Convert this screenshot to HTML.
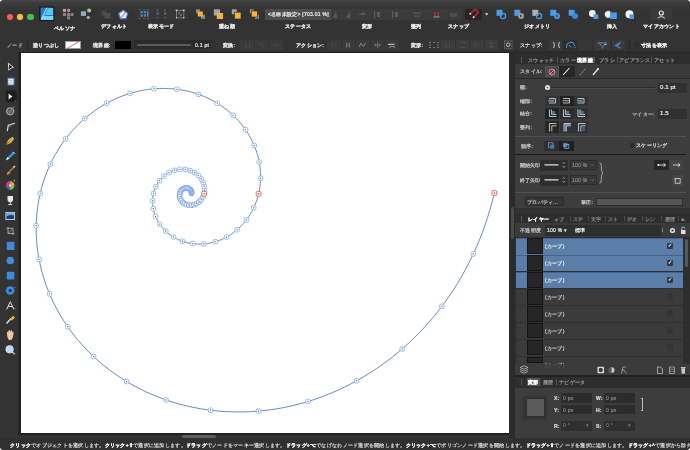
<!DOCTYPE html>
<html><head><meta charset="utf-8">
<style>
*{margin:0;padding:0;box-sizing:border-box}
html,body{width:690px;height:450px;background:#fff;overflow:hidden}
body{font-family:"Liberation Sans",sans-serif;position:relative}
.win{position:absolute;left:0;top:0;width:690px;height:450px;background:#333;border-radius:4px;overflow:hidden}
.a{position:absolute}
.t{position:absolute;font-size:5px;letter-spacing:.26px;line-height:7px;will-change:transform;-webkit-text-stroke-width:.2px;color:#d8d8d8;white-space:nowrap}
.b{font-weight:bold;color:#fff}
.b2{font-weight:bold;color:#e0e0e0}
.lbl{position:absolute;font-size:5px;letter-spacing:.26px;line-height:7px;will-change:transform;-webkit-text-stroke-width:.2px;color:#e8e8e8;white-space:nowrap;top:23px;font-weight:bold}
.canvas{position:absolute;left:21px;top:53px;width:488px;height:380px;background:#fff}
svg{position:absolute;left:0;top:0;overflow:visible}
.bn{fill:#fff;stroke:#86aee6;stroke-width:.85}
.bn2{fill:#fff;stroke:#6f9ee4;stroke-width:.9}
.bd{fill:#4a70a8}
.rn{fill:#fff;stroke:#e05a5a;stroke-width:.9}
</style></head><body>
<div class="win">
<!-- ===== top toolbar ===== -->
<div class="a tbgrad" style="left:0;top:0;width:690px;height:14px;background:linear-gradient(#4a4a4a 0,#3c3c3c 2.5px,#363636 8px,#333 14px)"></div>
<div class="a" style="left:6.7px;top:13.8px;width:6.6px;height:6.6px;border-radius:50%;background:#f0605a;box-shadow:0 0 0 .5px #6a2020"></div>
<div class="a" style="left:16.7px;top:13.8px;width:6.6px;height:6.6px;border-radius:50%;background:#f5bf48;box-shadow:0 0 0 .5px #6a4a10"></div>
<div class="a" style="left:27px;top:13.8px;width:6.6px;height:6.6px;border-radius:50%;background:#48c04c;box-shadow:0 0 0 .5px #1a5a1a"></div>

<div class="lbl" style="left:54px;top:25px">ペルソナ</div>
<div class="lbl" style="left:101px">デフォルト</div>
<div class="lbl" style="left:148px">表示モード</div>
<div class="lbl" style="left:219px">重ね順</div>
<div class="lbl" style="left:285px">ステータス</div>
<div class="lbl" style="left:362px">変形</div>
<div class="lbl" style="left:411px">整列</div>
<div class="lbl" style="left:448px">スナップ</div>
<div class="lbl" style="left:524px">ジオメトリ</div>
<div class="lbl" style="left:607px">挿入</div>
<div class="lbl" style="left:643px">マイアカウント</div>

<!-- status box -->
<div class="a" style="left:265px;top:8.5px;width:66px;height:11.5px;background:#4d4d4d"></div>
<div class="a" style="left:331px;top:8.5px;width:131px;height:11.5px;background:#3b3b3b"></div>
<div class="t" style="left:268px;top:11px;color:#eee">&lt;名称未設定&gt; [703.01 %]</div>
<div class="a" style="left:464.5px;top:9px;width:17px;height:11px;background:#262626"></div>
<div class="a" style="left:650.5px;top:8.3px;width:21.5px;height:11.3px;background:#3a3a3a"></div>

<!-- ===== context toolbar ===== -->
<div class="t" style="left:7px;top:41.5px;color:#bbb">ノード</div>
<div class="a" style="left:26.5px;top:40px;width:1px;height:10px;background:#262626"></div>
<div class="t b2" style="left:33px;top:41.5px">塗りつぶし</div>
<div class="a" style="left:65px;top:41px;width:16px;height:8px;background:#fff;border:.5px solid #999"></div>
<div class="t b2" style="left:93px;top:41.5px">境界線:</div>
<div class="a" style="left:115px;top:41px;width:16px;height:8px;background:#000"></div>
<div class="a" style="left:134px;top:40px;width:77px;height:9px;background:#2b2b2b"></div>
<div class="a" style="left:137px;top:44.3px;width:54px;height:1.6px;border-radius:1px;background:#5a5a5a"></div>
<div class="t" style="left:195px;top:41.5px;color:#eee">0.1 pt</div>
<div class="t b2" style="left:223px;top:41.5px">変換:</div>
<div class="a" style="left:240px;top:40px;width:43px;height:10px;background:#3a3a3a"></div>
<div class="t b2" style="left:296px;top:41.5px">アクション:</div>
<div class="a" style="left:327px;top:40px;width:72px;height:10px;background:#3a3a3a"></div>
<div class="t b2" style="left:411px;top:41.5px">変形:</div>
<div class="a" style="left:427px;top:40px;width:14px;height:10px;background:#353535"></div>
<div class="a" style="left:441px;top:40px;width:57px;height:10px;background:#3c3c3c"></div>
<div class="a" style="left:504px;top:40px;width:8.5px;height:10px;background:#3a3a3a"></div>
<div class="t" style="left:520px;top:41.5px;color:#e8e8e8">スナップ:</div>
<div class="a" style="left:549px;top:40px;width:28px;height:10px;background:#3a3a3a"></div><div class="a" style="left:563.2px;top:40px;width:13.8px;height:10px;background:#2e2e2e"></div><div class="a" style="left:577.5px;top:40px;width:15px;height:10px;background:#363636"></div><div class="a" style="left:593.5px;top:40px;width:16.5px;height:10px;background:#3a3a3a"></div><div class="a" style="left:611.5px;top:40px;width:13.5px;height:10px;background:#3a3a3a"></div>
<div class="a" style="left:629px;top:40px;width:1px;height:10px;background:#262626"></div>
<div class="a" style="left:633.5px;top:42px;width:5.5px;height:5.5px;background:#2e2e2e;border-radius:1px"></div>
<div class="t b2" style="left:641px;top:41.5px;color:#eee">寸法を表示</div>
<div class="a" style="left:19px;top:51.5px;width:490px;height:1.5px;background:#1e1e1e"></div>

<!-- ===== left tools ===== -->
<div class="a" style="left:18px;top:52px;width:3px;height:383px;background:linear-gradient(90deg,#2a2a2a,#1e1e1e)"></div><div class="a" style="left:18px;top:433px;width:491px;height:1.5px;background:#222"></div>

<!-- ===== canvas ===== -->
<div class="canvas"></div>
<svg width="690" height="450" viewBox="0 0 690 450" style="clip-path:inset(53px 181px 17px 21px)">
<path d="M494.3 193.0 492.3 201.2 490.0 209.4 487.6 217.4 485.0 225.2 482.2 233.0 479.2 240.6 476.0 248.1 472.6 255.5 469.0 262.7 465.3 269.8 461.4 276.8 457.4 283.6 453.2 290.2 448.8 296.7 444.3 303.0 439.7 309.2 434.9 315.2 430.0 321.0 425.0 326.6 419.9 332.1 414.6 337.4 409.2 342.6 403.8 347.5 398.2 352.3 392.6 356.9 386.8 361.3 381.0 365.5 375.1 369.6 369.2 373.4 363.1 377.1 357.0 380.6 350.9 383.9 344.7 387.0 338.5 389.9 332.2 392.7 325.9 395.2 319.6 397.6 313.3 399.8 306.9 401.8 300.5 403.6 294.1 405.3 287.8 406.7 281.4 408.0 275.0 409.1 268.6 410.0 262.3 410.7 256.0 411.3 249.7 411.7 243.4 411.9 237.2 411.9 231.0 411.8 224.9 411.5 218.8 411.1 212.7 410.5 206.8 409.7 200.8 408.8 195.0 407.7 189.2 406.5 183.5 405.1 177.8 403.6 172.3 402.0 166.8 400.2 161.4 398.2 156.0 396.2 150.8 394.0 145.7 391.7 140.7 389.2 135.7 386.7 130.9 384.0 126.2 381.2 121.5 378.3 117.0 375.3 112.6 372.2 108.3 369.0 104.1 365.7 100.1 362.4 96.1 358.9 92.3 355.3 88.6 351.7 85.0 348.0 81.5 344.2 78.2 340.4 75.0 336.5 71.9 332.5 68.9 328.5 66.1 324.4 63.4 320.3 60.8 316.1 58.4 311.9 56.1 307.6 53.9 303.4 51.8 299.0 49.9 294.7 48.1 290.3 46.4 286.0 44.9 281.6 43.5 277.1 42.2 272.7 41.0 268.3 40.0 263.9 39.1 259.4 38.3 255.0 37.6 250.6 37.1 246.2 36.7 241.8 36.4 237.4 36.2 233.1 36.2 228.8 36.2 224.5 36.4 220.2 36.7 216.0 37.1 211.8 37.6 207.6 38.2 203.5 38.9 199.4 39.7 195.4 40.7 191.4 41.7 187.5 42.8 183.6 44.1 179.8 45.4 176.0 46.8 172.3 48.3 168.7 49.9 165.1 51.6 161.6 53.3 158.2 55.2 154.8 57.1 151.5 59.1 148.3 61.1 145.2 63.3 142.1 65.5 139.1 67.7 136.2 70.1 133.3 72.5 130.6 74.9 127.9 77.4 125.3 80.0 122.8 82.6 120.4 85.2 118.1 88.0 115.8 90.7 113.7 93.5 111.6 96.3 109.6 99.2 107.7 102.0 105.9 105.0 104.2 107.9 102.6 110.9 101.0 113.9 99.6 116.9 98.2 119.9 97.0 122.9 95.8 126.0 94.7 129.0 93.7 132.1 92.8 135.2 92.0 138.3 91.2 141.3 90.6 144.4 90.0 147.5 89.5 150.5 89.2 153.6 88.9 156.6 88.6 159.6 88.5 162.6 88.4 165.6 88.5 168.6 88.6 171.5 88.7 174.4 89.0 177.3 89.3 180.2 89.8 183.0 90.2 185.8 90.8 188.6 91.4 191.3 92.1 194.0 92.9 196.7 93.7 199.3 94.6 201.8 95.6 204.4 96.6 206.9 97.7 209.3 98.9 211.7 100.1 214.0 101.4 216.3 102.7 218.6 104.0 220.8 105.5 222.9 106.9 225.0 108.5 227.1 110.0 229.0 111.6 231.0 113.3 232.8 115.0 234.6 116.7 236.4 118.5 238.1 120.3 239.7 122.1 241.3 124.0 242.8 125.9 244.2 127.8 245.6 129.8 246.9 131.7 248.2 133.7 249.4 135.8 250.5 137.8 251.6 139.9 252.6 141.9 253.6 144.0 254.5 146.1 255.3 148.2 256.1 150.3 256.8 152.4 257.4 154.6 258.0 156.7 258.5 158.8 259.0 161.0 259.4 163.1 259.7 165.2 260.0 167.3 260.2 169.4 260.4 171.6 260.5 173.7 260.6 175.7 260.6 177.8 260.5 179.9 260.4 181.9 260.2 183.9 260.0 185.9 259.7 187.9 259.4 189.9 259.0 191.9 258.6 193.8 258.1 195.7 257.6 197.6 257.0 199.4 256.4 201.2 255.7 203.0 255.0 204.8 254.3 206.5 253.5 208.2 252.7 209.9 251.8 211.5 250.9 213.1 249.9 214.7 249.0 216.2 247.9 217.7 246.9 219.2 245.8 220.6 244.7 222.0 243.6 223.3 242.4 224.6 241.2 225.9 240.0 227.1 238.7 228.3 237.5 229.4 236.2 230.5 234.9 231.6 233.5 232.6 232.2 233.5 230.8 234.5 229.4 235.4 228.0 236.2 226.6 237.0 225.2 237.8 223.8 238.5 222.3 239.1 220.9 239.8 219.4 240.4 217.9 240.9 216.5 241.4 215.0 241.8 213.5 242.3 212.0 242.6 210.6 243.0 209.1 243.2 207.6 243.5 206.1 243.7 204.7 243.9 203.2 244.0 201.7 244.1 200.3 244.1 198.9 244.1 197.4 244.1 196.0 244.0 194.6 243.9 193.2 243.7 191.8 243.6 190.5 243.3 189.1 243.1 187.8 242.8 186.4 242.5 185.1 242.1 183.8 241.7 182.6 241.3 181.3 240.8 180.1 240.4 178.9 239.9 177.7 239.3 176.6 238.7 175.4 238.1 174.3 237.5 173.2 236.9 172.1 236.2 171.1 235.5 170.1 234.8 169.1 234.0 168.1 233.3 167.2 232.5 166.3 231.7 165.4 230.8 164.6 230.0 163.7 229.1 162.9 228.3 162.2 227.4 161.4 226.5 160.7 225.5 160.0 224.6 159.4 223.7 158.8 222.7 158.2 221.7 157.6 220.8 157.1 219.8 156.6 218.8 156.1 217.8 155.7 216.8 155.3 215.8 154.9 214.7 154.5 213.7 154.2 212.7 153.9 211.7 153.7 210.7 153.4 209.6 153.2 208.6 153.0 207.6 152.9 206.6 152.8 205.5 152.7 204.5 152.6 203.5 152.6 202.5 152.6 201.5 152.6 200.5 152.6 199.5 152.7 198.5 152.8 197.6 152.9 196.6 153.1 195.7 153.3 194.7 153.4 193.8 153.7 192.9 153.9 192.0 154.2 191.1 154.5 190.2 154.8 189.3 155.1 188.5 155.5 187.6 155.8 186.8 156.2 186.0 156.6 185.2 157.1 184.4 157.5 183.7 158.0 182.9 158.5 182.2 159.0 181.5 159.5 180.8 160.0 180.1 160.5 179.5 161.1 178.8 161.7 178.2 162.2 177.6 162.8 177.0 163.4 176.5 164.1 176.0 164.7 175.4 165.3 174.9 166.0 174.5 166.6 174.0 167.3 173.6 168.0 173.2 168.6 172.8 169.3 172.4 170.0 172.0 170.7 171.7 171.4 171.4 172.1 171.1 172.8 170.8 173.5 170.6 174.2 170.4 174.9 170.2 175.6 170.0 176.4 169.8 177.1 169.7 177.8 169.5 178.5 169.4 179.2 169.3 179.9 169.3 180.6 169.2 181.3 169.2 182.0 169.2 182.7 169.2 183.4 169.2 184.0 169.3 184.7 169.3 185.4 169.4 186.1 169.5 186.7 169.6 187.4 169.8 188.0 169.9 188.6 170.1 189.2 170.3 189.9 170.5 190.5 170.7 191.1 170.9 191.6 171.1 192.2 171.4 192.8 171.7 193.3 172.0 193.9 172.2 194.4 172.6 194.9 172.9 195.4 173.2 195.9 173.5 196.4 173.9 196.9 174.3 197.3 174.6 197.8 175.0 198.2 175.4 198.6 175.8 199.0 176.2 199.4 176.7 199.8 177.1 200.1 177.5 200.5 178.0 200.8 178.4 201.1 178.9 201.4 179.3 201.7 179.8 202.0 180.2 202.3 180.7 202.5 181.2 202.8 181.7 203.0 182.2 203.2 182.6 203.4 183.1 203.5 183.6 203.7 184.1 203.8 184.6 204.0 185.1 204.1 185.6 204.2 186.1 204.3 186.6 204.4 187.1 204.4 187.6 204.5 188.1 204.5 188.5 204.5 189.0 204.5 189.5 204.5 190.0 204.5 190.5 204.5 190.9 204.5 191.4 204.4 191.9 204.3 192.3 204.3 192.8 204.2 193.2 204.1 193.7 204.0 194.1 203.8 194.5 203.7 195.0 203.5 195.4 203.4 195.8 203.2 196.2 203.1 196.6 202.9 197.0 202.7 197.4 202.5 197.8 202.3 198.1 202.0 198.5 201.8 198.9 201.6 199.2 201.3 199.5 201.1 199.9 200.8 200.2 200.6 200.5 200.3 200.8 200.0 201.1 199.7 201.4 199.4 201.6 199.1 201.9 198.8 202.1 198.5 202.4 198.2 202.6 197.9 202.8 197.6 203.1 197.3 203.3 196.9 203.5 196.6 203.6 196.3 203.8 196.0 204.0 195.6 204.1 195.3 204.3 194.9 204.4 194.6 204.5 194.3 204.6 193.9 204.7 193.6 204.8 193.2 204.9 192.9 205.0 192.6 205.1 192.2 205.1 191.9 205.2 191.5 205.2 191.2 205.2 190.9 205.2 190.5 205.2 190.2 205.2 189.9 205.2 189.5 205.2 189.2 205.2 188.9 205.2 188.6 205.1 188.2 205.1 187.9 205.0 187.6 204.9 187.3 204.9 187.0 204.8 186.7 204.7 186.4 204.6 186.1 204.5 185.9 204.4 185.6 204.2 185.3 204.1 185.0 204.0 184.8 203.8 184.5 203.7 184.3 203.5 184.0 203.4 183.8 203.2 183.5 203.1 183.3 202.9 183.1 202.7 182.9 202.5 182.7 202.3 182.5 202.1 182.3 201.9 182.1 201.7 181.9 201.5 181.7 201.3 181.6 201.1 181.4 200.9 181.2 200.7 181.1 200.5 180.9 200.2 180.8 200.0 180.7 199.8 180.6 199.6 180.4 199.3 180.3 199.1 180.2 198.9 180.1 198.6 180.1 198.4 180.0 198.2 179.9 197.9 179.8 197.7 179.8 197.5 179.7 197.2 179.7 197.0 179.6 196.7 179.6 196.5 179.6 196.3 179.6 196.0 179.5 195.8 179.5 195.6 179.5 195.3 179.5 195.1 179.6 194.9 179.6 194.7 179.6 194.4 179.6 194.2 179.7 194.0 179.7 193.8 179.7 193.6 179.8 193.3 179.9 193.1 179.9 192.9 180.0 192.7 180.1 192.5 180.1 192.3 180.2 192.1 180.3 191.9 180.4 191.8 180.5 191.6 180.6 191.4 180.7 191.2 180.8 191.0 180.9 190.9 181.0 190.7 181.2 190.6 181.3 190.4 181.4 190.2 181.5 190.1 181.7 190.0 181.8 189.8 181.9 189.7 182.1 189.6 182.2 189.4 182.4 189.3 182.5 189.2 182.7 189.1 182.8 189.0 183.0 188.9 183.1 188.8 183.3 188.7 183.4 188.6 183.6 188.5 183.8 188.5 183.9 188.4 184.1 188.3 184.3 188.3 184.4 188.2 184.6 188.2 184.7 188.1 184.9 188.1 185.1 188.0 185.2 188.0 185.4 188.0 185.6 188.0 185.7 187.9 185.9 187.9 186.1 187.9 186.2 187.9 186.4 187.9 186.5 187.9 186.7 187.9 186.9 187.9 187.0 187.9 187.2 188.0 187.3 188.0 187.5 188.0 187.6 188.0 187.8 188.1 187.9 188.1 188.1 188.2 188.2 188.2 188.3 188.3 188.5 188.3 188.6 188.4 188.7 188.4 188.9 188.5 189.0 188.5 189.1 188.6 189.2 188.7 189.4 188.8 189.5 188.8 189.6 188.9 189.7 189.0 189.8 189.1 189.9 189.2 190.0 189.3 190.1 189.4 190.2 189.5 190.3 189.5 190.4 189.6 190.5 189.7 190.6 189.8 190.6 189.9 190.7 190.1 190.8 190.2 190.9 190.3 190.9 190.4 191.0 190.5 191.1 190.6 191.1 190.7 191.2 190.8 191.2 190.9 191.3 191.0 191.3 191.1 191.3 191.3 191.4 191.4 191.4 191.5 191.4 191.6 191.5 191.7 191.5 191.8 191.5 191.9 191.5 192.1 191.5 192.2 191.6 192.3 191.6 192.4 191.6 192.5 191.6 192.6 191.6 192.7 191.6 192.8 191.6 193.0 191.5 193.1 191.5 193.2 191.5 193.3 191.5 193.4 191.5 193.5 191.5 193.6" fill="none" stroke="#5576a6" stroke-width=".85"/>
<rect x="189.2" y="191.3" width="4.5" height="4.5" rx="1.6" class="bn2"/><rect x="190.9" y="193.0" width="1.2" height="1.2" class="bd"/>
<rect x="189.3" y="190.5" width="4.5" height="4.5" rx="1.6" class="bn2"/><rect x="191.0" y="192.2" width="1.2" height="1.2" class="bd"/>
<rect x="189.3" y="189.6" width="4.5" height="4.5" rx="1.6" class="bn2"/><rect x="190.9" y="191.3" width="1.2" height="1.2" class="bd"/>
<rect x="189.0" y="188.8" width="4.5" height="4.5" rx="1.6" class="bn2"/><rect x="190.6" y="190.4" width="1.2" height="1.2" class="bd"/>
<rect x="188.5" y="187.9" width="4.5" height="4.5" rx="1.6" class="bn2"/><rect x="190.2" y="189.5" width="1.2" height="1.2" class="bd"/>
<rect x="187.9" y="187.1" width="4.5" height="4.5" rx="1.6" class="bn2"/><rect x="189.5" y="188.8" width="1.2" height="1.2" class="bd"/>
<rect x="187.0" y="186.5" width="4.5" height="4.5" rx="1.6" class="bn2"/><rect x="188.7" y="188.1" width="1.2" height="1.2" class="bd"/>
<rect x="186.0" y="186.0" width="4.5" height="4.5" rx="1.6" class="bn2"/><rect x="187.7" y="187.6" width="1.2" height="1.2" class="bd"/>
<rect x="184.9" y="185.7" width="4.5" height="4.5" rx="1.6" class="bn2"/><rect x="186.5" y="187.4" width="1.2" height="1.2" class="bd"/>
<rect x="183.7" y="185.7" width="4.5" height="4.5" rx="1.6" class="bn2"/><rect x="185.3" y="187.3" width="1.2" height="1.2" class="bd"/>
<rect x="182.4" y="185.9" width="4.5" height="4.5" rx="1.6" class="bn2"/><rect x="184.0" y="187.5" width="1.2" height="1.2" class="bd"/>
<rect x="181.1" y="186.4" width="4.5" height="4.5" rx="1.6" class="bn2"/><rect x="182.8" y="188.1" width="1.2" height="1.2" class="bd"/>
<rect x="179.9" y="187.2" width="4.5" height="4.5" rx="1.6" class="bn2"/><rect x="181.6" y="188.9" width="1.2" height="1.2" class="bd"/>
<rect x="178.9" y="188.3" width="4.5" height="4.5" rx="1.6" class="bn2"/><rect x="180.6" y="189.9" width="1.2" height="1.2" class="bd"/>
<rect x="178.1" y="189.6" width="4.5" height="4.5" rx="1.6" class="bn2"/><rect x="179.7" y="191.3" width="1.2" height="1.2" class="bd"/>
<rect x="177.5" y="191.2" width="4.5" height="4.5" rx="1.6" class="bn2"/><rect x="179.2" y="192.8" width="1.2" height="1.2" class="bd"/>
<rect x="177.3" y="192.9" width="4.5" height="4.5" rx="1.6" class="bn2"/><rect x="178.9" y="194.6" width="1.2" height="1.2" class="bd"/>
<rect x="177.4" y="194.7" width="4.5" height="4.5" rx="1.6" class="bn2"/><rect x="179.1" y="196.4" width="1.2" height="1.2" class="bd"/>
<rect x="178.0" y="196.6" width="4.5" height="4.5" rx="1.6" class="bn2"/><rect x="179.6" y="198.2" width="1.2" height="1.2" class="bd"/>
<rect x="178.9" y="198.3" width="4.5" height="4.5" rx="1.6" class="bn2"/><rect x="180.6" y="200.0" width="1.2" height="1.2" class="bd"/>
<rect x="180.3" y="200.0" width="4.5" height="4.5" rx="1.6" class="bn2"/><rect x="181.9" y="201.6" width="1.2" height="1.2" class="bd"/>
<rect x="182.0" y="201.3" width="4.5" height="4.5" rx="1.6" class="bn2"/><rect x="183.7" y="203.0" width="1.2" height="1.2" class="bd"/>
<rect x="184.1" y="202.3" width="4.5" height="4.5" rx="1.6" class="bn2"/><rect x="185.8" y="204.0" width="1.2" height="1.2" class="bd"/>
<rect x="186.5" y="202.9" width="4.5" height="4.5" rx="1.6" class="bn2"/><rect x="188.2" y="204.5" width="1.2" height="1.2" class="bd"/>
<rect x="189.1" y="203.0" width="4.5" height="4.5" rx="1.6" class="bn2"/><rect x="190.7" y="204.6" width="1.2" height="1.2" class="bd"/>
<rect x="191.7" y="202.5" width="4.5" height="4.5" rx="1.6" class="bn2"/><rect x="193.4" y="204.1" width="1.2" height="1.2" class="bd"/>
<rect x="194.3" y="201.4" width="4.5" height="4.5" rx="1.6" class="bn2"/><rect x="196.0" y="203.0" width="1.2" height="1.2" class="bd"/>
<rect x="196.8" y="199.7" width="4.5" height="4.5" rx="1.6" class="bn2"/><rect x="198.4" y="201.4" width="1.2" height="1.2" class="bd"/>
<rect x="198.9" y="197.5" width="4.5" height="4.5" rx="1.6" class="bn2"/><rect x="200.6" y="199.1" width="1.2" height="1.2" class="bd"/>
<rect x="200.7" y="194.7" width="4.5" height="4.5" rx="1.6" class="bn2"/><rect x="202.3" y="196.3" width="1.2" height="1.2" class="bd"/>
<rect x="202.3" y="187.8" width="4.5" height="4.5" rx="1.6" class="bn"/><rect x="203.9" y="189.5" width="1.2" height="1.2" class="bd"/>
<rect x="202.0" y="184.1" width="4.5" height="4.5" rx="1.6" class="bn"/><rect x="203.6" y="185.7" width="1.2" height="1.2" class="bd"/>
<rect x="200.9" y="180.2" width="4.5" height="4.5" rx="1.6" class="bn"/><rect x="202.5" y="181.9" width="1.2" height="1.2" class="bd"/>
<rect x="198.9" y="176.6" width="4.5" height="4.5" rx="1.6" class="bn"/><rect x="200.5" y="178.2" width="1.2" height="1.2" class="bd"/>
<rect x="196.0" y="173.2" width="4.5" height="4.5" rx="1.6" class="bn"/><rect x="197.7" y="174.9" width="1.2" height="1.2" class="bd"/>
<rect x="192.4" y="170.4" width="4.5" height="4.5" rx="1.6" class="bn"/><rect x="194.0" y="172.1" width="1.2" height="1.2" class="bd"/>
<rect x="188.0" y="168.3" width="4.5" height="4.5" rx="1.6" class="bn"/><rect x="189.6" y="170.0" width="1.2" height="1.2" class="bd"/>
<rect x="183.1" y="167.2" width="4.5" height="4.5" rx="1.6" class="bn"/><rect x="184.7" y="168.8" width="1.2" height="1.2" class="bd"/>
<rect x="177.7" y="167.0" width="4.5" height="4.5" rx="1.6" class="bn"/><rect x="179.4" y="168.7" width="1.2" height="1.2" class="bd"/>
<rect x="172.2" y="168.1" width="4.5" height="4.5" rx="1.6" class="bn"/><rect x="173.9" y="169.7" width="1.2" height="1.2" class="bd"/>
<rect x="166.8" y="170.3" width="4.5" height="4.5" rx="1.6" class="bn"/><rect x="168.4" y="172.0" width="1.2" height="1.2" class="bd"/>
<rect x="161.7" y="173.8" width="4.5" height="4.5" rx="1.6" class="bn"/><rect x="163.3" y="175.5" width="1.2" height="1.2" class="bd"/>
<rect x="157.2" y="178.5" width="4.5" height="4.5" rx="1.6" class="bn"/><rect x="158.9" y="180.2" width="1.2" height="1.2" class="bd"/>
<rect x="153.7" y="184.3" width="4.5" height="4.5" rx="1.6" class="bn"/><rect x="155.3" y="186.0" width="1.2" height="1.2" class="bd"/>
<rect x="151.3" y="191.1" width="4.5" height="4.5" rx="1.6" class="bn"/><rect x="153.0" y="192.7" width="1.2" height="1.2" class="bd"/>
<rect x="150.3" y="198.5" width="4.5" height="4.5" rx="1.6" class="bn"/><rect x="152.0" y="200.2" width="1.2" height="1.2" class="bd"/>
<rect x="151.0" y="206.4" width="4.5" height="4.5" rx="1.6" class="bn"/><rect x="152.6" y="208.0" width="1.2" height="1.2" class="bd"/>
<rect x="153.3" y="214.3" width="4.5" height="4.5" rx="1.6" class="bn"/><rect x="155.0" y="216.0" width="1.2" height="1.2" class="bd"/>
<rect x="157.5" y="221.9" width="4.5" height="4.5" rx="1.6" class="bn"/><rect x="159.2" y="223.6" width="1.2" height="1.2" class="bd"/>
<rect x="163.5" y="228.9" width="4.5" height="4.5" rx="1.6" class="bn"/><rect x="165.1" y="230.5" width="1.2" height="1.2" class="bd"/>
<rect x="171.1" y="234.7" width="4.5" height="4.5" rx="1.6" class="bn"/><rect x="172.7" y="236.3" width="1.2" height="1.2" class="bd"/>
<rect x="180.2" y="239.0" width="4.5" height="4.5" rx="1.6" class="bn"/><rect x="181.8" y="240.6" width="1.2" height="1.2" class="bd"/>
<rect x="190.4" y="241.4" width="4.5" height="4.5" rx="1.6" class="bn"/><rect x="192.1" y="243.1" width="1.2" height="1.2" class="bd"/>
<rect x="201.5" y="241.7" width="4.5" height="4.5" rx="1.6" class="bn"/><rect x="203.2" y="243.3" width="1.2" height="1.2" class="bd"/>
<rect x="213.0" y="239.5" width="4.5" height="4.5" rx="1.6" class="bn"/><rect x="214.6" y="241.2" width="1.2" height="1.2" class="bd"/>
<rect x="224.3" y="234.8" width="4.5" height="4.5" rx="1.6" class="bn"/><rect x="225.9" y="236.5" width="1.2" height="1.2" class="bd"/>
<rect x="234.8" y="227.5" width="4.5" height="4.5" rx="1.6" class="bn"/><rect x="236.5" y="229.1" width="1.2" height="1.2" class="bd"/>
<rect x="244.1" y="217.7" width="4.5" height="4.5" rx="1.6" class="bn"/><rect x="245.7" y="219.3" width="1.2" height="1.2" class="bd"/>
<rect x="251.4" y="205.6" width="4.5" height="4.5" rx="1.6" class="bn"/><rect x="253.1" y="207.2" width="1.2" height="1.2" class="bd"/>
<rect x="258.3" y="176.0" width="4.5" height="4.5" rx="1.6" class="bn"/><rect x="260.0" y="177.7" width="1.2" height="1.2" class="bd"/>
<rect x="256.9" y="159.7" width="4.5" height="4.5" rx="1.6" class="bn"/><rect x="258.6" y="161.4" width="1.2" height="1.2" class="bd"/>
<rect x="252.0" y="143.2" width="4.5" height="4.5" rx="1.6" class="bn"/><rect x="253.6" y="144.9" width="1.2" height="1.2" class="bd"/>
<rect x="243.3" y="127.4" width="4.5" height="4.5" rx="1.6" class="bn"/><rect x="244.9" y="129.0" width="1.2" height="1.2" class="bd"/>
<rect x="230.9" y="113.0" width="4.5" height="4.5" rx="1.6" class="bn"/><rect x="232.5" y="114.7" width="1.2" height="1.2" class="bd"/>
<rect x="215.0" y="101.0" width="4.5" height="4.5" rx="1.6" class="bn"/><rect x="216.7" y="102.6" width="1.2" height="1.2" class="bd"/>
<rect x="196.1" y="92.1" width="4.5" height="4.5" rx="1.6" class="bn"/><rect x="197.7" y="93.7" width="1.2" height="1.2" class="bd"/>
<rect x="174.7" y="87.0" width="4.5" height="4.5" rx="1.6" class="bn"/><rect x="176.3" y="88.7" width="1.2" height="1.2" class="bd"/>
<rect x="151.6" y="86.6" width="4.5" height="4.5" rx="1.6" class="bn"/><rect x="153.3" y="88.2" width="1.2" height="1.2" class="bd"/>
<rect x="127.8" y="91.1" width="4.5" height="4.5" rx="1.6" class="bn"/><rect x="129.5" y="92.8" width="1.2" height="1.2" class="bd"/>
<rect x="104.4" y="101.0" width="4.5" height="4.5" rx="1.6" class="bn"/><rect x="106.0" y="102.7" width="1.2" height="1.2" class="bd"/>
<rect x="82.5" y="116.3" width="4.5" height="4.5" rx="1.6" class="bn"/><rect x="84.1" y="117.9" width="1.2" height="1.2" class="bd"/>
<rect x="63.3" y="136.7" width="4.5" height="4.5" rx="1.6" class="bn"/><rect x="64.9" y="138.4" width="1.2" height="1.2" class="bd"/>
<rect x="48.1" y="161.9" width="4.5" height="4.5" rx="1.6" class="bn"/><rect x="49.7" y="163.6" width="1.2" height="1.2" class="bd"/>
<rect x="37.9" y="191.2" width="4.5" height="4.5" rx="1.6" class="bn"/><rect x="39.6" y="192.8" width="1.2" height="1.2" class="bd"/>
<rect x="33.9" y="223.4" width="4.5" height="4.5" rx="1.6" class="bn"/><rect x="35.6" y="225.0" width="1.2" height="1.2" class="bd"/>
<rect x="36.9" y="257.3" width="4.5" height="4.5" rx="1.6" class="bn"/><rect x="38.5" y="259.0" width="1.2" height="1.2" class="bd"/>
<rect x="47.3" y="291.6" width="4.5" height="4.5" rx="1.6" class="bn"/><rect x="48.9" y="293.2" width="1.2" height="1.2" class="bd"/>
<rect x="65.4" y="324.5" width="4.5" height="4.5" rx="1.6" class="bn"/><rect x="67.1" y="326.1" width="1.2" height="1.2" class="bd"/>
<rect x="91.3" y="354.3" width="4.5" height="4.5" rx="1.6" class="bn"/><rect x="93.0" y="355.9" width="1.2" height="1.2" class="bd"/>
<rect x="124.4" y="379.3" width="4.5" height="4.5" rx="1.6" class="bn"/><rect x="126.0" y="380.9" width="1.2" height="1.2" class="bd"/>
<rect x="163.8" y="397.7" width="4.5" height="4.5" rx="1.6" class="bn"/><rect x="165.4" y="399.3" width="1.2" height="1.2" class="bd"/>
<rect x="208.3" y="408.0" width="4.5" height="4.5" rx="1.6" class="bn"/><rect x="209.9" y="409.6" width="1.2" height="1.2" class="bd"/>
<rect x="256.3" y="408.8" width="4.5" height="4.5" rx="1.6" class="bn"/><rect x="257.9" y="410.5" width="1.2" height="1.2" class="bd"/>
<rect x="305.7" y="399.2" width="4.5" height="4.5" rx="1.6" class="bn"/><rect x="307.4" y="400.9" width="1.2" height="1.2" class="bd"/>
<rect x="354.4" y="378.6" width="4.5" height="4.5" rx="1.6" class="bn"/><rect x="356.0" y="380.2" width="1.2" height="1.2" class="bd"/>
<rect x="399.9" y="346.7" width="4.5" height="4.5" rx="1.6" class="bn"/><rect x="401.5" y="348.4" width="1.2" height="1.2" class="bd"/>
<rect x="439.6" y="304.1" width="4.5" height="4.5" rx="1.6" class="bn"/><rect x="441.3" y="305.7" width="1.2" height="1.2" class="bd"/>
<rect x="471.1" y="251.6" width="4.5" height="4.5" rx="1.6" class="bn"/><rect x="472.8" y="253.2" width="1.2" height="1.2" class="bd"/>
<rect x="201.7" y="191.3" width="4.8" height="4.8" rx="1.3" class="rn"/><rect x="203.4" y="193.0" width="1.3" height="1.3" fill="#c33"/>
<rect x="256.2" y="191.4" width="4.8" height="4.8" rx="1.3" class="rn"/><rect x="257.9" y="193.1" width="1.3" height="1.3" fill="#c33"/>
<rect x="491.9" y="190.6" width="4.8" height="4.8" rx="1.3" class="rn"/><rect x="493.6" y="192.4" width="1.3" height="1.3" fill="#c33"/>
</svg>

<!-- ===== right panel ===== -->
<div class="a" style="left:509px;top:50.5px;width:181px;height:388px;background:#2b2b2b"></div>
<div class="a" style="left:511px;top:207px;width:3px;height:32px;border-radius:1.5px;background:#4a4a4a"></div>
<!-- stroke panel -->
<div class="a" style="left:514.5px;top:54px;width:175.5px;height:10.3px;background:#2d2d2d"></div>
<div class="a" style="left:514.5px;top:64.3px;width:175.5px;height:13.3px;background:#3a3a3a"></div>
<div class="a" style="left:514.5px;top:77.6px;width:175.5px;height:1.4px;background:#2a2a2a"></div>
<div class="a" style="left:514.5px;top:79px;width:175.5px;height:129px;background:#3d3d3d"></div>
<div class="a" style="left:520.5px;top:56.5px;width:.8px;height:6px;background:#555"></div>
<div class="t" style="left:528px;top:56.5px;color:#999">スウォッチ</div>
<div class="a" style="left:556.5px;top:56.5px;width:.8px;height:6px;background:#555"></div>
<div class="t" style="left:559.5px;top:56.5px;color:#999">カラー</div>
<div class="a" style="left:577.2px;top:56.5px;width:18px;height:6.5px;background:#555"></div>
<div class="t" style="left:577.3px;top:56.5px;color:#fff;font-weight:bold">境界線</div>
<div class="t" style="left:599px;top:56.5px;color:#999">ブラシ</div>
<div class="a" style="left:617px;top:56.5px;width:.8px;height:6px;background:#555"></div>
<div class="t" style="left:619px;top:56.5px;color:#999">アピアランス</div>
<div class="a" style="left:651.2px;top:56.5px;width:.8px;height:6px;background:#555"></div>
<div class="t" style="left:653.5px;top:56.5px;color:#999">アセット</div>
<div class="t" style="left:520px;top:67.5px;color:#ccc">スタイル:</div>
<div class="a" style="left:545px;top:65.5px;width:14px;height:11px;background:#4a4a4a;border:.6px solid #555"></div>
<div class="a" style="left:559px;top:65.5px;width:16px;height:11px;background:#262626"></div>
<div class="a" style="left:575px;top:65.5px;width:17px;height:11px;background:#3a3a3a"></div>
<div class="a" style="left:592px;top:65.5px;width:9px;height:11px;background:#3a3a3a"></div>
<div class="t" style="left:520px;top:84px;color:#ccc">幅:</div>
<div class="a" style="left:549px;top:86.5px;width:106px;height:1px;background:#2a2a2a"></div><div class="a" style="left:549px;top:87.5px;width:106px;height:.6px;background:#4a4a4a"></div>
<div class="a" style="left:544.6px;top:84.7px;width:5.6px;height:5.6px;border-radius:50%;background:#eee"></div>
<div class="a" style="left:658px;top:83px;width:28.5px;height:10px;background:#303030"></div>
<div class="t" style="left:660px;top:84px;color:#eee;font-size:6px;letter-spacing:.1px">0.1 pt</div>
<div class="t" style="left:520px;top:97.5px;color:#ccc">端部:</div>
<div class="t" style="left:520px;top:110px;color:#ccc">結合:</div>
<div class="t" style="left:520px;top:123.5px;color:#ccc">整列:</div>
<div class="a" style="left:545px;top:96px;width:14.3px;height:9.5px;background:#333"></div><div class="a" style="left:559.5px;top:96px;width:14.3px;height:9.5px;background:#222"></div><div class="a" style="left:574px;top:96px;width:14px;height:9.5px;background:#333"></div>
<div class="a" style="left:545px;top:108px;width:14.3px;height:10.7px;background:#222"></div><div class="a" style="left:559.5px;top:108px;width:14.3px;height:10.7px;background:#2c2c2c"></div><div class="a" style="left:574px;top:108px;width:14px;height:10.7px;background:#333"></div>
<div class="a" style="left:545px;top:121px;width:14.3px;height:12px;background:#262626"></div><div class="a" style="left:559.5px;top:121px;width:14.3px;height:12px;background:#333"></div><div class="a" style="left:574px;top:121px;width:14px;height:12px;background:#333"></div>
<div class="t" style="left:632px;top:110.5px;color:#bbb">マイター:</div>
<div class="a" style="left:658px;top:109px;width:28.5px;height:10px;background:#303030"></div>
<div class="t" style="left:660px;top:110px;color:#eee;font-size:6px;letter-spacing:.1px">1.5</div>
<div class="a" style="left:514.5px;top:135.6px;width:171.5px;height:1.1px;background:#505050"></div>
<div class="t" style="left:520.5px;top:142.5px;color:#ccc">順序:</div>
<div class="a" style="left:544px;top:140.5px;width:15px;height:10.2px;background:#2f2f2f"></div>
<div class="a" style="left:559px;top:140.5px;width:15px;height:10.2px;background:#202020"></div>
<div class="a" style="left:629.5px;top:143px;width:4.5px;height:4.5px;border-radius:1px;background:#2c2c2c"></div>
<div class="t" style="left:636px;top:142px;color:#eee">スケーリング</div>
<div class="a" style="left:514.5px;top:153.8px;width:171.5px;height:1.1px;background:#1a1a1a"></div>
<div class="t" style="left:520px;top:161.5px;color:#ccc;letter-spacing:-.1px">開始矢印</div>
<div class="t" style="left:520px;top:176.5px;color:#ccc;letter-spacing:-.1px">終了矢印</div>
<div class="a" style="left:539.5px;top:159.5px;width:28px;height:11px;background:#2e2e2e"></div>
<div class="a" style="left:539.5px;top:174.5px;width:28px;height:11px;background:#2e2e2e"></div>




<div class="a" style="left:570px;top:159.5px;width:26.5px;height:10.5px;background:#383838;border:.6px solid #2c2c2c"></div>
<div class="a" style="left:570px;top:174.5px;width:26.5px;height:10.5px;background:#383838;border:.6px solid #2c2c2c"></div>
<div class="t" style="left:572px;top:161.5px;color:#888">100 %</div>
<div class="t" style="left:572px;top:176.5px;color:#888">100 %</div>

<div class="a" style="left:654px;top:160px;width:15px;height:10px;background:#262626"></div>
<div class="a" style="left:669px;top:160px;width:14px;height:10px;background:#454545"></div>


<div class="a" style="left:672px;top:175px;width:11px;height:11px;background:#454545"></div>

<div class="a" style="left:514.5px;top:192.4px;width:171.5px;height:1.1px;background:#505050"></div>
<div class="a" style="left:525px;top:197.4px;width:38.5px;height:9px;background:#363636;border:.7px solid #2a2a2a;border-radius:1px"></div>
<div class="t" style="left:527px;top:198.5px;color:#bbb">プロパティ...</div>
<div class="t" style="left:581px;top:198.5px;color:#ccc">筆圧:</div>
<div class="a" style="left:596px;top:198px;width:87px;height:8px;background:#2c2c2c"></div>
<div class="a" style="left:597px;top:199px;width:85px;height:6px;background:#555"></div>
<!-- layers panel -->
<div class="a" style="left:514.5px;top:208px;width:175.5px;height:6px;background:#323232"></div>
<div class="a" style="left:514.5px;top:214px;width:175.5px;height:9px;background:#2e2e2e"></div>
<div class="a" style="left:520.5px;top:215.5px;width:.8px;height:6px;background:#555"></div>
<div class="t" style="left:528px;top:215.5px;color:#fff;font-weight:bold">レイヤー</div>
<div class="t" style="left:554px;top:215.5px;color:#8a8a8a">ォブ</div><div class="t" style="left:573px;top:215.5px;color:#8a8a8a">ステ</div><div class="t" style="left:591px;top:215.5px;color:#8a8a8a">文字</div><div class="t" style="left:607.5px;top:215.5px;color:#8a8a8a">スト</div><div class="t" style="left:627px;top:215.5px;color:#8a8a8a">デオ</div><div class="t" style="left:644.5px;top:215.5px;color:#8a8a8a">シン</div><div class="t" style="left:665px;top:215.5px;color:#8a8a8a">履歴</div><div class="t" style="left:681px;top:215.5px;color:#8a8a8a">■.</div><div class="a" style="left:569.5px;top:215.8px;width:.7px;height:5.5px;background:#4a4a4a"></div><div class="a" style="left:588px;top:215.8px;width:.7px;height:5.5px;background:#4a4a4a"></div><div class="a" style="left:604.5px;top:215.8px;width:.7px;height:5.5px;background:#4a4a4a"></div><div class="a" style="left:623.5px;top:215.8px;width:.7px;height:5.5px;background:#4a4a4a"></div><div class="a" style="left:641.5px;top:215.8px;width:.7px;height:5.5px;background:#4a4a4a"></div><div class="a" style="left:661px;top:215.8px;width:.7px;height:5.5px;background:#4a4a4a"></div><div class="a" style="left:677.5px;top:215.8px;width:.7px;height:5.5px;background:#4a4a4a"></div>
<div class="a" style="left:514.5px;top:223px;width:175.5px;height:14px;background:#3b3b3b"></div>
<div class="t" style="left:520px;top:227px;color:#ccc">不透明度</div>
<div class="a" style="left:545px;top:225px;width:26px;height:11px;background:#2e2e2e"></div>
<div class="t" style="left:547px;top:227px;color:#eee">100 %  ▾</div>
<div class="a" style="left:571px;top:225px;width:90px;height:11px;background:#2e2e2e"></div>
<div class="t" style="left:575px;top:227px;color:#eee">標準</div>
<div class="t" style="left:662px;top:227px;color:#ccc">⁝</div>
<div class="a" style="left:514.5px;top:237px;width:168px;height:126.5px;background:#2e2e2e"></div>
<div class="a" style="left:682.5px;top:237px;width:7.5px;height:126.5px;background:#2e2e2e"></div>
<div class="a" style="left:684.5px;top:238.5px;width:3px;height:28px;border-radius:1.5px;background:#585858"></div>
<div class="a" style="left:516px;top:237.7px;width:166.5px;height:16.9px;background:#5b7ea8;border-top:1px solid #46648a"></div>
<div class="a" style="left:527.2px;top:238.39999999999998px;width:15.6px;height:15.6px;background:#262626;border:.7px solid #141414"></div>
<div class="t" style="left:545px;top:243.2px;color:#e8eef8">(カーブ)</div>
<div class="a" style="left:666.5px;top:242.7px;width:6.5px;height:6.5px;border-radius:1px;background:#2d3a4a"></div><div class="t" style="left:667.5px;top:242.2px;color:#fff;font-size:5px">✓</div>
<div class="a" style="left:516px;top:254.6px;width:166.5px;height:16.9px;background:#5b7ea8;border-top:1px solid #46648a"></div>
<div class="a" style="left:527.2px;top:255.29999999999998px;width:15.6px;height:15.6px;background:#262626;border:.7px solid #141414"></div>
<div class="t" style="left:545px;top:260.1px;color:#e8eef8">(カーブ)</div>
<div class="a" style="left:666.5px;top:259.6px;width:6.5px;height:6.5px;border-radius:1px;background:#2d3a4a"></div><div class="t" style="left:667.5px;top:259.1px;color:#fff;font-size:5px">✓</div>
<div class="a" style="left:516px;top:271.5px;width:166.5px;height:16.9px;background:#5b7ea8;border-top:1px solid #46648a"></div>
<div class="a" style="left:527.2px;top:272.2px;width:15.6px;height:15.6px;background:#262626;border:.7px solid #141414"></div>
<div class="t" style="left:545px;top:277.0px;color:#e8eef8">(カーブ)</div>
<div class="a" style="left:666.5px;top:276.5px;width:6.5px;height:6.5px;border-radius:1px;background:#2d3a4a"></div><div class="t" style="left:667.5px;top:276.0px;color:#fff;font-size:5px">✓</div>
<div class="a" style="left:516px;top:288.4px;width:166.5px;height:16.9px;background:#3b3b3b;border-top:1px solid #303030"></div>
<div class="a" style="left:527.2px;top:289.09999999999997px;width:15.6px;height:15.6px;background:#262626;border:.7px solid #141414"></div>
<div class="t" style="left:545px;top:293.9px;color:#ccc">(カーブ)</div>
<div class="a" style="left:666.5px;top:293.4px;width:6.5px;height:6.5px;border-radius:1px;background:#353535"></div>
<div class="a" style="left:516px;top:305.3px;width:166.5px;height:16.9px;background:#3b3b3b;border-top:1px solid #303030"></div>
<div class="a" style="left:527.2px;top:306.0px;width:15.6px;height:15.6px;background:#262626;border:.7px solid #141414"></div>
<div class="t" style="left:545px;top:310.8px;color:#ccc">(カーブ)</div>
<div class="a" style="left:666.5px;top:310.3px;width:6.5px;height:6.5px;border-radius:1px;background:#353535"></div>
<div class="a" style="left:516px;top:322.2px;width:166.5px;height:16.9px;background:#3b3b3b;border-top:1px solid #303030"></div>
<div class="a" style="left:527.2px;top:322.9px;width:15.6px;height:15.6px;background:#262626;border:.7px solid #141414"></div>
<div class="t" style="left:545px;top:327.7px;color:#ccc">(カーブ)</div>
<div class="a" style="left:666.5px;top:327.2px;width:6.5px;height:6.5px;border-radius:1px;background:#353535"></div>
<div class="a" style="left:516px;top:339.1px;width:166.5px;height:16.9px;background:#3b3b3b;border-top:1px solid #303030"></div>
<div class="a" style="left:527.2px;top:339.8px;width:15.6px;height:15.6px;background:#262626;border:.7px solid #141414"></div>
<div class="t" style="left:545px;top:344.6px;color:#ccc">(カーブ)</div>
<div class="a" style="left:666.5px;top:344.1px;width:6.5px;height:6.5px;border-radius:1px;background:#353535"></div>
<div class="a" style="left:516px;top:356.0px;width:166.5px;height:7.5px;background:#3b3b3b;border-top:1px solid #303030"></div>
<div class="a" style="left:527.2px;top:356.7px;width:15.6px;height:6.8px;background:#262626;border:.7px solid #141414"></div>
<div class="t" style="left:545px;top:361.5px;color:#ccc">(カーブ)</div>
<div class="a" style="left:514.5px;top:363.5px;width:175.5px;height:11.5px;background:rgba(62,62,62,.88)"></div>
<div class="a" style="left:514.5px;top:375px;width:175.5px;height:1.5px;background:#222"></div>
<div class="a" style="left:514.5px;top:376.5px;width:175.5px;height:11.5px;background:#2e2e2e"></div>
<div class="a" style="left:521px;top:378.5px;width:.8px;height:6px;background:#555"></div>
<div class="a" style="left:527px;top:378px;width:12.7px;height:8px;background:#555"></div>
<div class="t" style="left:527.5px;top:378.5px;color:#fff;font-weight:bold">変形</div>
<div class="t" style="left:542.5px;top:378.5px;color:#999">履歴</div>
<div class="a" style="left:556px;top:378.5px;width:.8px;height:6px;background:#555"></div>
<div class="t" style="left:559px;top:378.5px;color:#999">ナビゲータ</div>
<div class="a" style="left:514.5px;top:388px;width:175.5px;height:50px;background:#3d3d3d"></div>
<div class="a" style="left:522px;top:396px;width:25px;height:23.5px;background:#363636;border-radius:1px"></div><div class="a" style="left:526.7px;top:399.3px;width:17px;height:17.2px;background:#5a5a5a;box-shadow:0 0 1.5px 1px #2e2e2e"></div><div class="a" style="left:534.5px;top:407.5px;width:1.6px;height:1.6px;background:#4a4a4a;border-radius:50%"></div>
<div class="t" style="left:554px;top:395px;color:#ddd;font-weight:bold">X:</div>
<div class="t" style="left:554px;top:406.5px;color:#ddd;font-weight:bold">Y:</div>
<div class="t" style="left:554px;top:422.5px;color:#ddd;font-weight:bold">R:</div>
<div class="t" style="left:596px;top:395px;color:#ddd;font-weight:bold">W:</div>
<div class="t" style="left:596px;top:406.5px;color:#ddd;font-weight:bold">H:</div>
<div class="t" style="left:596px;top:422.5px;color:#ddd;font-weight:bold">S:</div>
<div class="a" style="left:561px;top:393.3px;width:31px;height:9.7px;background:#2c2c2c"></div>
<div class="a" style="left:561px;top:404.6px;width:31px;height:9.7px;background:#2c2c2c"></div>
<div class="a" style="left:561px;top:420.5px;width:31px;height:10px;background:#2f2f2f"></div>
<div class="a" style="left:604px;top:393.3px;width:30.5px;height:9.7px;background:#2c2c2c"></div>
<div class="a" style="left:604px;top:404.6px;width:30.5px;height:9.7px;background:#2c2c2c"></div>
<div class="a" style="left:604px;top:420.5px;width:30.5px;height:10px;background:#2f2f2f"></div>
<div class="t" style="left:563px;top:395px;color:#888">0 px</div>
<div class="t" style="left:563px;top:406.5px;color:#888">0 px</div>
<div class="t" style="left:563px;top:422px;color:#777">0 °</div>
<div class="t" style="left:586px;top:422px;color:#777">▾</div>
<div class="t" style="left:606px;top:395px;color:#888">0 px</div>
<div class="t" style="left:606px;top:406.5px;color:#888">0 px</div>
<div class="t" style="left:606px;top:422px;color:#777">0 °</div>
<div class="t" style="left:628px;top:422px;color:#777">▾</div>
<div class="a" style="left:640.5px;top:398px;width:2.5px;height:13px;border:.8px solid #bbb;border-left:none"></div>

<!-- ===== status bar ===== -->
<div class="a" style="left:0;top:438px;width:690px;height:12px;background:#303030"></div>
<div class="a" style="left:182px;top:434.6px;width:34px;height:3.4px;border-radius:1.7px;background:#5e5e5e"></div>
<div class="t st" style="left:10px;top:441.5px"><span class="b">クリック</span><span class="n">でオブジェクトを選択します。</span><span class="b">クリック+⇧</span><span class="n">で選択に追加します。</span><span class="b">ドラッグ</span><span class="n">でノードをマーキー選択します。</span><span class="b">ドラッグ+⌥</span><span class="n">でなげなわノード選択を開始します。</span><span class="b">クリック+⌥</span><span class="n">でポリゴンノード選択を開始します。</span><span class="b">ドラッグ+⇧</span><span class="n">でノードを選択に追加します。</span><span class="b">ドラッグ+^</span><span class="n">で選択から除外します。</span></div>

<svg width="690" height="450" viewBox="0 0 690 450">
<!-- logo -->
<rect x="39.2" y="6.5" width="15.3" height="14.6" fill="#161b22"/>
<rect x="40.8" y="7.8" width="12.4" height="12" fill="#58c6f2"/>
<path d="M40.8 7.8 H46 L40.8 18.5Z" fill="#2e74c6"/>
<path d="M40.8 19.8 L46.8 7.8 H48.2 L42.3 19.8Z" fill="#a8e8ff"/>
<path d="M44 15.6 L47.9 8.2" stroke="#1d5fa8" stroke-width=".7"/>
<path d="M44.5 15.6 H53.2" stroke="#1d5fa8" stroke-width=".8"/>
<rect x="42.5" y="16" width="10.7" height="3.8" fill="#78d8fa"/>
<!-- persona grid -->
<g opacity=".85">
<rect x="63" y="8.9" width="3" height="3" fill="#e0b48a"/><rect x="67.1" y="8.9" width="3" height="3" fill="#a0a8cc"/>
<rect x="63" y="13" width="3" height="3" fill="#9a8eb2"/><rect x="67.1" y="13" width="3" height="3" fill="#c88a68"/><rect x="70.7" y="13" width="2.8" height="3" fill="#8a90a2"/>
<rect x="67.1" y="16.3" width="3" height="3" fill="#8e8e98"/>
</g>
<!-- share-like -->
<g opacity=".9">
<rect x="80.9" y="11.3" width="5.1" height="4.6" fill="#98b8dc"/>
<circle cx="89.1" cy="10.5" r="2" fill="#b8da98"/>
<circle cx="88.3" cy="17.4" r="1.7" fill="#aaaacc"/>
</g>
<rect x="97" y="8.4" width="17" height="11" fill="#363636"/><rect x="101.5" y="10.5" width="5" height="5" fill="#4a4a4a"/><rect x="104.5" y="13" width="6" height="5.5" fill="#555" opacity=".8"/>
<!-- pentagon -->
<path d="M123.2 9.6 L128.4 13.3 L126.4 19.3 L120 19.3 L118 13.3 Z" fill="#3a8ee0"/>
<path d="M123.2 11 L127 13.8 L125.5 18.1 L120.9 18.1 L119.4 13.8 Z" fill="#f4eef2"/>
<path d="M120.6 18 L125.6 12.4" stroke="#e06a88" stroke-width="1.1"/>
<!-- view modes -->
<rect x="135.6" y="8.4" width="52" height="11" fill="#373737"/>
<g fill="#4d80b8"><rect x="140.5" y="11" width="2.4" height="2.4"/><rect x="143.8" y="11" width="2.4" height="2.4"/><rect x="140.5" y="14.3" width="2.4" height="2.4"/><rect x="143.8" y="14.3" width="2.4" height="2.4"/><rect x="147" y="11" width="1.6" height="5.7"/></g>
<g fill="#8ab0d8" opacity=".6"><circle cx="139.5" cy="9.6" r=".6"/><circle cx="144" cy="9.6" r=".6"/><circle cx="148" cy="9.6" r=".6"/><circle cx="139.5" cy="18.4" r=".6"/><circle cx="144" cy="18.4" r=".6"/><circle cx="148" cy="18.4" r=".6"/></g>
<g fill="#5a7088" opacity=".9"><circle cx="157.5" cy="10" r=".9"/><circle cx="165" cy="10" r=".9"/><rect x="156.5" y="12.5" width="2.2" height="2.2"/><rect x="164" y="12.5" width="2.2" height="2.2"/><circle cx="157.5" cy="17.8" r=".8"/><circle cx="165" cy="17.8" r=".8"/></g>
<path d="M176.5 10.5 H183.8 V17.8 H176.5Z" fill="none" stroke="#888" stroke-width=".8"/>
<g fill="#ddd"><circle cx="176.5" cy="10.3" r=".9"/><circle cx="183.8" cy="10.3" r=".9"/><circle cx="176.5" cy="17.8" r=".7"/><circle cx="183.8" cy="17.8" r=".7"/></g>
<rect x="178.3" y="12.3" width="1.8" height="1.8" fill="#777"/><rect x="180.1" y="14.1" width="1.8" height="1.8" fill="#777"/>
<!-- arrange icons -->
<rect x="196" y="9.3" width="4" height="4" fill="#8c8c8c"/><rect x="201" y="14.8" width="4" height="4" fill="#8c8c8c"/><rect x="197.8" y="11.5" width="5" height="5" fill="#f2b340"/>
<rect x="213.8" y="9.3" width="6.2" height="6.2" fill="#a5a5a5"/><rect x="216.8" y="13" width="6.2" height="6" fill="#f2b340"/>
<rect x="231.8" y="9.3" width="5" height="5" fill="#a5a5a5"/><rect x="234.5" y="12.2" width="6.5" height="6.8" fill="#f2b340" stroke="#2a2a2a" stroke-width="0.6"/>
<rect x="249.8" y="9.3" width="4" height="4" fill="#8c8c8c"/><rect x="255" y="14.8" width="4" height="4" fill="#8c8c8c"/><rect x="251.3" y="11" width="6" height="6" fill="#f2b340" stroke="#2a2a2a" stroke-width="0.6"/>
<!-- faint transform/align icons -->
<g fill="#5a5a5a">
<path d="M333 18 L336 11 L337 18 Z"/><path d="M346 18 L350 11 V18 Z"/><path d="M358 15 L364 12 L366 15 Z"/>
<rect x="374" y="11" width="1.3" height="7"/><rect x="377" y="12" width="3" height="5"/>
<rect x="392" y="11" width="1.3" height="7"/><rect x="395" y="12" width="3" height="5"/>
<rect x="413" y="12.5" width="8" height="1.2"/><rect x="414" y="15.5" width="6" height="1.2"/>
</g>
<rect x="434" y="12" width="1.4" height="4.5" fill="#a83848"/><rect x="437.5" y="12" width="1.4" height="4.5" fill="#a83848"/><rect x="433.5" y="16.5" width="6" height=".9" fill="#aaa"/>
<rect x="450" y="13.5" width="7" height=".9" fill="#666"/><rect x="450" y="15.5" width="7" height=".9" fill="#666"/>
<!-- magnet -->
<g transform="translate(475.3 12.2) rotate(45)">
<path d="M-2.4 5 V0 A2.4 2.4 0 0 1 2.4 0 V5" fill="none" stroke="#b8203c" stroke-width="1.7"/>
<path d="M-2.4 4 V5.6 M2.4 4 V5.6" stroke="#f0e0e4" stroke-width="1.7"/>
</g>
<path d="M485 13.3 H488.4 L486.7 15.6 Z" fill="#e8e8e8"/>
<!-- geometry icons -->
<g>
<rect x="496.5" y="9.8" width="6" height="6" fill="#4a9be8"/><circle cx="503" cy="16" r="2.6" fill="none" stroke="#4a9be8" stroke-width="1.3"/>
<rect x="514.3" y="9.8" width="6" height="6" fill="#4a9be8"/><circle cx="521" cy="16" r="3" fill="#9a9a9a"/><path d="M520 14.8 L522.3 16 L520 17.2Z" fill="#333"/>
<rect x="532.3" y="9.8" width="6" height="6" fill="#b0b0b0"/><circle cx="539" cy="16" r="2.6" fill="none" stroke="#4a9be8" stroke-width="1.3"/>
<rect x="550.3" y="9.8" width="6" height="6" fill="#4a9be8"/><circle cx="557" cy="16" r="3" fill="#4a9be8"/><circle cx="557" cy="16" r="1.4" fill="#2f5f9a"/>
<rect x="568.7" y="9.8" width="6" height="6" fill="#4a9be8"/><circle cx="575" cy="16" r="3" fill="#3c86d8"/>
<circle cx="592.3" cy="13.5" r="3.4" fill="#f4f4f4"/><rect x="593.5" y="14.5" width="4.8" height="4.5" fill="#4a9be8"/>
<rect x="610" y="12.5" width="6.8" height="6.5" fill="#4a9be8"/><path d="M611 12.5 A3.4 3.4 0 1 0 610 17.3 V12.5Z" fill="#f4f4f4"/>
<circle cx="629.5" cy="14.3" r="4" fill="#f4f4f4"/><path d="M629.5 14.3 H634 V19 H629.5Z" fill="#4a9be8"/>
</g>
<!-- fill swatch slash --><path d="M67 48.5 L79 41.5" stroke="#e04848" stroke-width=".8"/>
<!-- account -->
<circle cx="661.3" cy="13" r="2" fill="none" stroke="#e8e8e8" stroke-width="1.2"/>
<path d="M657.8 18.2 Q661.3 15.2 664.8 18.2" fill="none" stroke="#e8e8e8" stroke-width="1"/>
</svg>
<svg width="690" height="450" viewBox="0 0 690 450">
<!-- style buttons -->
<circle cx="552" cy="72" r="2.9" fill="#8a2838" stroke="#d8c8cc" stroke-width=".7"/><path d="M550.2 73.8 L553.8 70.2" stroke="#f0d0d8" stroke-width=".8"/>
<path d="M563 75 L569.5 68" stroke="#f0f0f0" stroke-width="1.1"/>
<path d="M580 75 L586 68" stroke="#bbb" stroke-width=".9" stroke-dasharray="1.3 1"/>
<path d="M593 75 L598 69" stroke="#e8e8e8" stroke-width="1.3"/><circle cx="598" cy="69" r="1.1" fill="#eee"/>
<circle cx="547.4" cy="87.5" r="1" fill="#666"/>
<!-- cap buttons -->
<g stroke="#d8dde4" stroke-width=".8" fill="none">
<path d="M549 98.5 H555.5 V103 H549 M548.5 100.8 H554"/>
<path d="M563 98.5 H569.5 V103 H563 M562.5 100.8 H569"/>
<path d="M577.5 98.5 H584 V103 H577.5 M577 100.8 H582"/>
</g>
<rect x="548.6" y="99.5" width="6" height="2.6" fill="#5e7fa0" opacity=".6"/>
<rect x="577" y="99.5" width="6.5" height="2.6" fill="#5e7fa0" opacity=".6"/>
<!-- join buttons -->
<g stroke="#c8d8ea" stroke-width=".9" fill="none">
<path d="M549.5 109.5 V116.5 H556.5 M551.5 109.5 V114.5 H556.5"/>
<path d="M563.5 109.5 V116.5 H570.5 M565.5 109.5 V114.5 H570.5"/>
<path d="M578 109.5 V116.5 H585 M580 109.5 V114.5 H585"/>
</g>
<rect x="551.5" y="111" width="3.5" height="3.5" fill="#6890b8" opacity=".7"/>
<rect x="565.5" y="111" width="3.5" height="3.5" fill="#6890b8" opacity=".7"/>
<rect x="580" y="111" width="3.5" height="3.5" fill="#6890b8" opacity=".7"/>
<!-- align buttons -->
<g stroke="#d8e2ee" stroke-width=".8" fill="none">
<path d="M549.5 131.5 V123.5 H556.5 M551.8 131.5 V125.8 H556.5"/>
<path d="M564 131.5 V123.5 H571 M566.3 131.5 V125.8 H571"/>
<path d="M578.5 131.5 V123.5 H585.5 M580.8 131.5 V125.8 H585.5"/>
</g>
<rect x="564.6" y="124.2" width="1.2" height="7" fill="#7aa6d8"/><rect x="564.6" y="124.2" width="6" height="1.2" fill="#7aa6d8"/>
<rect x="581.5" y="126.5" width="3.5" height="4.5" fill="#4a6a90" opacity=".7"/>
<!-- order buttons -->
<rect x="548.5" y="142.8" width="4.5" height="4.5" fill="none" stroke="#7aa4d0" stroke-width=".7"/><rect x="550.3" y="144.6" width="4" height="4" fill="#4a7ab0"/>
<rect x="563" y="142.8" width="4.5" height="4.5" fill="#4a7ab8"/><rect x="564.8" y="144.6" width="4" height="4" fill="none" stroke="#8ab0e0" stroke-width=".7"/>
<!-- arrows section -->
<path d="M544.5 164.8 H558.5 M544.5 179.8 H558.5" stroke="#e0e0e0" stroke-width="1.2"/>
<path d="M562.5 163.8 L563.8 162.3 L565.1 163.8 M562.5 166 L563.8 167.5 L565.1 166 M562.5 178.8 L563.8 177.3 L565.1 178.8 M562.5 181 L563.8 182.5 L565.1 181" stroke="#ccc" stroke-width=".6" fill="none"/>
<path d="M591 164.3 L592.3 165.8 L593.6 164.3 M591 179.3 L592.3 180.8 L593.6 179.3" stroke="#888" stroke-width=".6" fill="none"/>
<path d="M599.5 162.8 Q601.5 162.8 601.3 166 Q601 170 602.5 173 Q601 176 601.3 180 Q601.5 183.2 599.5 183.2" stroke="#d0d0d0" stroke-width=".7" fill="none"/>
<path d="M658 165 H665.5 M663.5 163.3 L665.5 165 L663.5 166.7" stroke="#fff" stroke-width=".8" fill="none"/><circle cx="658.3" cy="165" r=".9" fill="#fff"/>
<path d="M673 165 H680 M678 163.3 L680 165 L678 166.7" stroke="#eee" stroke-width=".8" fill="none"/>
<path d="M675.2 178.5 H680.2 V183.3 H675.2Z" fill="none" stroke="#ddd" stroke-width=".8"/><path d="M674.5 179.5 L675.2 178.3 L676.2 179.3" stroke="#ddd" stroke-width=".6" fill="none"/>
<!-- pressure -->
<!-- layers opacity row icons -->
<circle cx="672.5" cy="230.5" r="2.6" fill="#ddd"/><circle cx="672.5" cy="230.5" r="1.1" fill="#383838"/>
<rect x="681" y="230" width="4.5" height="4" fill="#ddd"/><path d="M681.8 230 V228.5 A1.5 1.5 0 0 1 684.8 228.5" stroke="#ddd" stroke-width=".8" fill="none"/>
<!-- layer bottom bar icons -->
<g stroke="#ccc" stroke-width=".7" fill="none">
<path d="M520 367.5 L524 365.8 L528 367.5 L524 369.2Z M520 369.5 L524 371.2 L528 369.5 M520 371.5 L524 373.2 L528 371.5"/>
</g>
<rect x="597.5" y="366.8" width="6.5" height="6.5" rx=".8" fill="#e0e0e0"/><circle cx="600.75" cy="370.05" r="2.2" fill="#3c3c3c"/>
<circle cx="611.6" cy="370.1" r="2.9" fill="#ccc"/><path d="M611.6 367.2 A2.9 2.9 0 0 0 611.6 373Z" fill="#555"/>
<path d="M621.5 373.5 L622.8 367 H626 M622 370 H624.5 M624.2 370.5 L626.5 373.5" stroke="#ccc" stroke-width=".6" fill="none"/>
<path d="M657.5 367 H660.5 L662.5 369 V373.5 H657.5Z" fill="none" stroke="#ccc" stroke-width=".7"/>
<rect x="669.5" y="367" width="5" height="6.5" fill="none" stroke="#bbb" stroke-width=".7"/><path d="M669.5 369.2 H674.5 M669.5 371.3 H674.5" stroke="#bbb" stroke-width=".5"/>
<path d="M681.3 368.3 H685.2 L684.8 373.7 H681.7Z" fill="#ccc"/><rect x="680.8" y="367" width="4.9" height=".9" fill="#ccc"/>
</svg>
<svg width="690" height="450" viewBox="0 0 690 450">
<!-- move tool -->
<path d="M8.3 63.2 L13.4 67.4 L10.9 68.1 L8.9 70.3 Z" fill="#111" stroke="#e0e0e0" stroke-width=".95" stroke-linejoin="round"/>
<!-- node box -->
<rect x="7.6" y="78" width="6.6" height="7.2" fill="#e6e6e6" stroke="#35597f" stroke-width="1.1"/>
<path d="M8.5 80.5 H13 M8.5 82.8 H13" stroke="#9aa" stroke-width=".5"/>
<!-- active node tool -->
<rect x="5.8" y="90.3" width="11" height="11.8" fill="#1d1d1d" rx="1.5"/>
<path d="M8.6 93.6 L12.3 96.6 L8.6 99.6 Z" fill="#fafafa"/>
<path d="M14.5 101.5 L16 100 V101.5Z" fill="#888"/>
<!-- contour tool -->
<circle cx="10.2" cy="111.3" r="4.1" fill="#9a9a9a"/><circle cx="10.2" cy="111.3" r="2.7" fill="#505050"/><path d="M8 112 L12 109.5 M8.5 113.5 L12.5 111" stroke="#aaa" stroke-width=".6"/><path d="M12.5 108 L14.5 106.5" stroke="#b07ab0" stroke-width=".8"/>
<!-- corner tool -->
<path d="M7.3 131.2 L8.3 125.2 L14.8 123.2" fill="none" stroke="#e8e8e8" stroke-width="1.1" stroke-linejoin="round"/><path d="M8.3 125.2 L11 127" stroke="#9ab" stroke-width=".6"/>
<!-- pen -->
<path d="M6 145 L8 140 L12 137 L14 139 L11 143 Z" fill="#e6a83c"/><path d="M6 145 L9.5 141.5" stroke="#6a4a10" stroke-width=".6"/><path d="M12 137 L14 139" stroke="#bbb" stroke-width="1"/>
<!-- pencil -->
<path d="M6.5 159.8 L7.5 157 L13 151.8 L14.8 153.6 L9.3 158.8 Z" fill="#3f8ad6"/><path d="M5.8 160.5 L7.5 157 L9.3 158.8Z" fill="#f0f0f0"/><path d="M13 151.8 L14.8 153.6" stroke="#eee" stroke-width="1"/>
<!-- brush -->
<path d="M6.5 175 Q6.8 172 9 171 L10.5 172.6 Q9.6 174.8 6.5 175Z" fill="#c8884a"/><path d="M9.5 171.5 L14.5 166.5" stroke="#b87040" stroke-width="1.7"/><path d="M13.5 167.5 L15 166" stroke="#ddd" stroke-width="1.2"/>
<!-- color wheel -->
<defs><linearGradient id="cw1" x1="0" y1="0" x2="1" y2="1"><stop offset="0" stop-color="#e040a0"/><stop offset=".5" stop-color="#8040e0"/><stop offset="1" stop-color="#40c060"/></linearGradient></defs>
<circle cx="10.2" cy="185.5" r="4.2" fill="url(#cw1)"/><path d="M10.2 185.5 L14.4 185.5 A4.2 4.2 0 0 1 10.2 189.7Z" fill="#60d040"/><path d="M10.2 185.5 L6 185.5 A4.2 4.2 0 0 1 10.2 181.3Z" fill="#e04060"/><path d="M10.2 185.5 L10.2 181.3 A4.2 4.2 0 0 1 14.4 185.5Z" fill="#f0a030"/><circle cx="10.2" cy="185.5" r="1.2" fill="#ddd"/>
<path d="M13.5 180.5 L15 179.5 L14.8 181.5Z" fill="#ccc"/>
<!-- transparency glass -->
<path d="M7.5 196 H13 V199.5 Q13 202 10.25 202.3 Q7.5 202 7.5 199.5Z" fill="#e8e8e8"/><path d="M10.25 202 V204 M8.2 204.6 H12.3" stroke="#e8e8e8" stroke-width=".9"/>
<!-- place image -->
<rect x="5.5" y="212" width="9.5" height="8" fill="#eee"/><rect x="6.3" y="212.8" width="7.9" height="6.4" fill="#1c3a6a"/><path d="M6.3 216.5 Q9 214 14.2 215.5 V212.8 H6.3Z" fill="#6ab0f0"/>
<!-- crop -->
<path d="M8 226.8 V233.5 H14.5 M6.5 228.3 H13 V235" fill="none" stroke="#aaa" stroke-width=".9"/><path d="M8 233.5 L13 228.3" stroke="#aaa" stroke-width=".7"/>
<!-- shapes -->
<rect x="6.8" y="241.8" width="7.6" height="8.2" fill="#3d8ae0"/>
<circle cx="10.3" cy="260.5" r="3.8" fill="#3d8ae0"/>
<rect x="6.8" y="271.8" width="7.6" height="7.6" rx="1" fill="#3d8ae0"/>
<circle cx="10.2" cy="290.5" r="4.3" fill="#3d8ae0"/><circle cx="10.2" cy="290.5" r="1.6" fill="#12305a"/>
<path d="M14 288 L15.5 286.5 V288Z" fill="#888"/>
<!-- text A -->
<path d="M6.7 309.4 L10.3 301.7 L13.9 309.4 M8.2 306.5 H12.4" fill="none" stroke="#e0e0e0" stroke-width="1"/>
<path d="M14 309 L15.5 307.5 V309Z" fill="#888"/>
<!-- eyedropper -->
<path d="M6.5 323.5 L11 318.5" stroke="#e8e8e8" stroke-width="1.3"/><path d="M10.5 319 L13.2 316.2 L14.4 317.4 L11.7 320.2Z" fill="#e8b840" stroke="#e8b840" stroke-width="1"/>
<!-- hand -->
<path d="M7 334 Q6.5 331.5 8 331.5 L8.2 333 L8.4 330.6 Q9.5 329.8 10 330.6 L10.2 332.6 L10.6 330.4 Q11.7 329.8 12 330.8 L12 333 L12.6 331.5 Q13.8 331.3 13.6 333 L13 336.5 Q12.5 340 9.5 340.3 Q7.4 339.5 7 334Z" fill="#f0c8a0"/>
<!-- zoom -->
<circle cx="9.6" cy="349.3" r="3.8" fill="#bcd8f4" stroke="#eef" stroke-width=".6"/><path d="M12.2 352 L14.8 354.2" stroke="#ccc" stroke-width="1.2"/>
</svg>
<svg width="690" height="450" viewBox="0 0 690 450">
<!-- transform buttons separators -->
<g fill="#2e2e2e"><rect x="254" y="40" width=".7" height="10"/><rect x="268.5" y="40" width=".7" height="10"/>
<rect x="341" y="40" width=".7" height="10"/><rect x="355.5" y="40" width=".7" height="10"/><rect x="370" y="40" width=".7" height="10"/><rect x="384.5" y="40" width=".7" height="10"/>
<rect x="455" y="40" width=".7" height="10"/><rect x="469.5" y="40" width=".7" height="10"/><rect x="484" y="40" width=".7" height="10"/>
<rect x="562.5" y="40" width=".7" height="10"/><rect x="577" y="40" width=".7" height="10"/><rect x="592.5" y="40" width=".7" height="10"/><rect x="610.5" y="40" width=".7" height="10"/></g>
<!-- faint transform icons -->
<g stroke="#4e4e4e" stroke-width=".8" fill="none"><path d="M246 42 V48 M250 42 V48 M259 43 L264 47 M273 45 H279"/></g>
<!-- action icons -->
<g stroke="#555" stroke-width=".6" fill="none"><path d="M332 42.5 V47.5 M336 42.5 V47.5"/></g>
<path d="M346.5 42.5 V47.5 M349.5 42.5 V47.5 M348 43.5 V46.5" stroke="#999" stroke-width=".6" fill="none"/>
<path d="M359.5 47 L360.5 43.5 Q361.5 42.8 362 44.5 Q362.6 46.8 363.8 46 L365.5 43" stroke="#aaa" stroke-width=".7" fill="none"/>
<path d="M374.5 45 H380.5 M376 43.8 L374.5 45 L376 46.2 M379 43.8 L380.5 45 L379 46.2 M377.5 42 V48" stroke="#8a8a8a" stroke-width=".6" fill="none"/>
<path d="M388 44.3 H394.5" stroke="#eee" stroke-width=".9"/><path d="M390 46.5 H394.5 M390 46.5 V48 M394.5 46.5 V48" stroke="#bbb" stroke-width=".6" fill="none"/>
<!-- transform dotted icon -->
<g fill="#ccc"><circle cx="430" cy="42.5" r=".6"/><circle cx="434" cy="42.5" r=".6"/><circle cx="438" cy="42.5" r=".6"/><circle cx="430" cy="45" r=".6"/><circle cx="438" cy="45" r=".6"/><circle cx="430" cy="47.5" r=".6"/><circle cx="434" cy="47.5" r=".6"/><circle cx="438" cy="47.5" r=".6"/></g>
<g stroke="#555" stroke-width=".7" fill="none"><path d="M446 42 V48 M449.5 42 V48 M460 42.5 H466 M460 47.5 H466 M475 42 V48 M478 44 V46 M489 43 H494 M489 47 H494 M491.5 42 V48"/></g>
<!-- snap icon left -->
<rect x="504.5" y="41" width="7.5" height="7.5" fill="none" stroke="#999" stroke-width=".6" stroke-dasharray="1 .8"/><circle cx="508.2" cy="44.8" r="1.8" fill="none" stroke="#ddd" stroke-width=".8"/>
<!-- snap buttons -->
<path d="M553.5 42 Q555.5 45 553.5 48 M559.5 42 Q557.5 45 559.5 48" stroke="#eee" stroke-width=".8" fill="none"/>
<path d="M566.5 48 Q566.5 42.3 571 42.3 Q574.5 42.5 574.5 46" stroke="#4a88d0" stroke-width="1.1" fill="none"/><path d="M573 46.5 L574.6 48.2 L576 46.3" stroke="#4a88d0" stroke-width=".7" fill="none"/><path d="M569 45 L571 47.5" stroke="#ccc" stroke-width=".6"/>
<path d="M597.5 43 H606.5 L602.5 46.8 V48.5 M599.5 43.5 L601.5 46" stroke="#5a98dc" stroke-width=".9" fill="none"/><path d="M604 44.5 H607" stroke="#ddd" stroke-width=".5"/>
<path d="M621 42.3 L615.2 45.5 L621 48.3" stroke="#4a80c8" stroke-width="1.1" fill="none"/><path d="M617 45.5 L619.5 44.3" stroke="#ddd" stroke-width=".5"/>
</svg>
<!--ICONS-->
</div>
</body></html>
